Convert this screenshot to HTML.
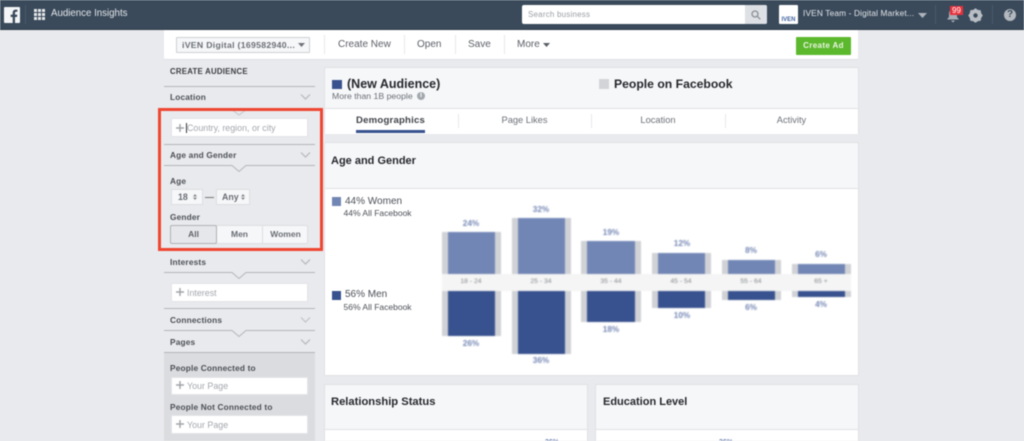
<!DOCTYPE html>
<html><head><meta charset="utf-8"><style>
*{box-sizing:border-box}
html,body{margin:0;padding:0;width:1024px;height:441px;overflow:hidden;background:#e9eaed;font-family:"Liberation Sans",sans-serif}
#p{position:relative;width:1024px;height:441px;overflow:hidden;filter:blur(.45px)}
#p div,#p svg{position:absolute}
.t{white-space:nowrap;line-height:1}
.lbl{font-weight:bold;font-size:8.3px;color:#4b4f56;letter-spacing:.17px}
.ln{background:#b4b6ba;height:1px;left:164px;width:151px}
.inp{background:#fff;left:171px;width:137px;border:1px solid #e3e4e7}
.ph{font-size:8.9px;color:#a4a7ad}
.w{background:#fff}
.pct{font-size:8.2px;color:#7688b5;font-weight:bold;width:40px;text-align:center}
.age{font-size:6.8px;color:#85888d;width:40px;text-align:center}
.tab{font-size:9.3px;color:#6d7178;text-align:center}
.g{background:#d0d2d6}
.f{background:#7286b5}
.m{background:#38528f}
</style></head><body><div id="p">
<div style="left:0;top:0;width:1024px;height:30px;background:#3a4a5b;border-bottom:1px solid #2e3b48"></div>
<svg style="left:4px;top:7px" width="16" height="16" viewBox="0 0 16 16"><rect width="16" height="16" rx="1" fill="#f4f5f6"/><path transform="translate(-4 0)" fill="#3a4a5b" d="M15 16V10h2l.3-2.400H15V6c0-.7.2-1.200 1.200-1.200h1.200V2.700C17.100 2.600 16.500 2.600 15.800 2.600c-1.900 0-3.100 1.100-3.100 3.200v1.800h-2v2.400h2V16z"/></svg>
<div style="left:25px;top:5px;width:1px;height:19px;background:#4b5a6a"></div>
<svg style="left:34px;top:9px" width="11" height="11" fill="#e6e8ea"><rect x="0" y="0" width="3" height="3"/><rect x="4" y="0" width="3" height="3"/><rect x="8" y="0" width="3" height="3"/><rect x="0" y="4" width="3" height="3"/><rect x="4" y="4" width="3" height="3"/><rect x="8" y="4" width="3" height="3"/><rect x="0" y="8" width="3" height="3"/><rect x="4" y="8" width="3" height="3"/><rect x="8" y="8" width="3" height="3"/></svg>
<div class="t" style="left:51px;top:9px;font-size:9.7px;color:#e4e6e9">Audience Insights</div>
<div style="left:522px;top:5px;width:245px;height:19px;background:#fff;border-radius:2px"></div>
<div style="left:745px;top:5px;width:22px;height:19px;background:#dde0e4;border-radius:0 2px 2px 0"></div>
<svg style="left:751px;top:10px" width="10" height="10" fill="none" stroke="#8b9097" stroke-width="1.300"><circle cx="4" cy="4" r="3"/><path d="M6.300 6.300L9.300 9.300"/></svg>
<div class="t" style="left:528px;top:11px;font-size:8px;color:#9a9ea4;letter-spacing:.2px">Search business</div>
<div style="left:779px;top:5px;width:19px;height:19px;background:#fff;border-radius:1px"></div>
<div class="t" style="left:779px;top:17px;font-size:6px;font-weight:bold;color:#41639f;width:19px;text-align:center">IVEN</div>
<div class="t" style="left:803px;top:9px;font-size:8.3px;color:#e4e6e9;letter-spacing:.15px">IVEN Team - Digital Market...</div>
<svg style="left:918px;top:13px" width="9" height="5" fill="#aeb4bb"><path d="M0 0H9L4.500 5Z"/></svg>
<div style="left:935px;top:5px;width:1px;height:19px;background:#4b5a6a"></div>
<svg style="left:946px;top:8px" width="14" height="15" fill="#a7adb5"><path d="M7 1C4 1 3 4 3 6V9L1 11.500H13L11 9V6C11 4 10 1 7 1Z"/><path d="M5 12.500H9L7 14.500Z"/></svg>
<div class="t" style="left:950px;top:6px;width:13px;height:9px;background:#e8303a;color:#fff;font-size:8px;text-align:center;line-height:9px">99</div>
<svg style="left:968px;top:8px" width="15" height="15" viewBox="0 0 15 15"><circle cx="7.500" cy="7.500" r="4.600" fill="none" stroke="#b9bec4" stroke-width="3.400"/><path d="M7.500 .5V14.500M.5 7.500H14.500M2.500 2.500L12.500 12.500M12.500 2.500L2.500 12.500" stroke="#b9bec4" stroke-width="2"/><circle cx="7.500" cy="7.500" r="2.200" fill="#3a4a5b"/></svg>
<div style="left:992px;top:5px;width:1px;height:19px;background:#4b5a6a"></div>
<div class="t" style="left:1004px;top:9px;width:12px;height:12px;border-radius:50%;background:#b4b9bf;color:#3a4a5b;font-size:10px;font-weight:bold;text-align:center;line-height:12px">?</div>

<div class="w" style="left:164px;top:30px;width:694px;height:30px;border-radius:0 0 2px 2px;border-bottom:1px solid #dfe0e3"></div>
<div style="left:176px;top:37px;width:134px;height:16px;background:#f6f7f9;border:1px solid #ced0d4;border-radius:1px"></div>
<div class="t" style="left:182px;top:40.500px;font-size:8.700px;font-weight:bold;color:#6a6e75;letter-spacing:.3px">iVEN Digital (169582940...</div>
<svg style="left:298px;top:43px" width="7" height="4" fill="#70747a"><path d="M0 0H7L3.500 4Z"/></svg>
<div style="left:324px;top:35px;width:1px;height:19px;background:#e7e8ea"></div>
<div class="t" style="left:338px;top:40px;font-size:10px;color:#5a5e65">Create New</div>
<div style="left:404px;top:35px;width:1px;height:19px;background:#e7e8ea"></div>
<div class="t" style="left:417px;top:40px;font-size:10px;color:#5a5e65">Open</div>
<div style="left:455px;top:35px;width:1px;height:19px;background:#e7e8ea"></div>
<div class="t" style="left:468px;top:40px;font-size:10px;color:#5a5e65">Save</div>
<div style="left:504px;top:35px;width:1px;height:19px;background:#e7e8ea"></div>
<div class="t" style="left:517px;top:40px;font-size:10px;color:#5a5e65">More</div>
<svg style="left:543px;top:43px" width="7" height="4" fill="#5a5e65"><path d="M0 0H7L3.500 4Z"/></svg>
<div class="t" style="left:796px;top:37px;width:55px;height:18px;background:#5cb82d;color:#eaf6e2;font-size:8px;font-weight:bold;text-align:center;line-height:18px;letter-spacing:.35px;border-radius:1px">Create Ad</div>

<div class="t" style="left:170px;top:68px;font-size:7.800px;font-weight:bold;color:#3a3d42;letter-spacing:.25px">CREATE AUDIENCE</div>
<div class="ln" style="top:86px"></div>
<div class="t lbl" style="left:170px;top:93px">Location</div>
<svg style="left:300px;top:94px" width="11" height="6" fill="none" stroke="#b5b7bb" stroke-width="1.200"><path d="M1 .5L5.500 5L10 .5"/></svg>
<svg style="left:232px;top:110px" width="14" height="6" fill="none" stroke="#c9cbce" stroke-width="1.200"><path d="M1 .5L7 5L13 .5"/></svg>
<div class="inp" style="top:118px;height:19px"></div>
<svg style="left:176px;top:124px" width="8" height="8" fill="#a0a3a9"><path d="M3.300 0H4.700V3.300H8V4.700H4.700V8H3.300V4.700H0V3.300H3.300Z"/></svg>
<div style="left:186px;top:123px;width:1px;height:10px;background:#333"></div>
<div class="t ph" style="left:187px;top:124px">Country, region, or city</div>
<div class="ln" style="top:144px"></div>
<div class="t lbl" style="left:170px;top:151px">Age and Gender</div>
<svg style="left:300px;top:152px" width="11" height="6" fill="none" stroke="#b5b7bb" stroke-width="1.200"><path d="M1 .5L5.500 5L10 .5"/></svg>
<svg style="left:164px;top:165px" width="151" height="8" fill="none" stroke="#b4b6ba"><path d="M0 .5H68L75 6.500L82 .5H151"/></svg>
<div class="t lbl" style="left:170px;top:177px">Age</div>
<div style="left:171px;top:189px;width:32px;height:16px;background:#f6f7f9;border:1px solid #dcdee1"></div>
<div class="t" style="left:178px;top:193px;font-size:8.800px;font-weight:bold;color:#696d74">18</div>
<svg style="left:193px;top:194px" width="4" height="6" fill="#85888e"><path d="M0 2.500L2 0L4 2.500ZM0 3.500L2 6L4 3.500Z"/></svg>
<div style="left:205px;top:197px;width:9px;height:1px;background:#777"></div>
<div style="left:216px;top:189px;width:34px;height:16px;background:#f6f7f9;border:1px solid #dcdee1"></div>
<div class="t" style="left:222px;top:193px;font-size:8.800px;font-weight:bold;color:#696d74">Any</div>
<svg style="left:241px;top:194px" width="4" height="6" fill="#85888e"><path d="M0 2.500L2 0L4 2.500ZM0 3.500L2 6L4 3.500Z"/></svg>
<div class="t lbl" style="left:170px;top:213px">Gender</div>
<div style="left:170px;top:225px;width:138px;height:19px;background:#f6f7f9;border:1px solid #dcdee1;border-radius:2px"></div>
<div class="t" style="left:170px;top:225px;width:47px;height:19px;background:#e6e7ea;border:1px solid #b0b2b6;border-radius:2px;font-size:8.500px;font-weight:bold;color:#5f636a;text-align:center;line-height:17px">All</div>
<div style="left:262px;top:226px;width:1px;height:17px;background:#dcdee1"></div>
<div class="t" style="left:217px;top:230px;width:45px;font-size:8.500px;font-weight:bold;color:#696d74;text-align:center">Men</div>
<div class="t" style="left:263px;top:230px;width:45px;font-size:8.500px;font-weight:bold;color:#696d74;text-align:center">Women</div>

<div class="t lbl" style="left:170px;top:258px">Interests</div>
<svg style="left:300px;top:259px" width="11" height="6" fill="none" stroke="#b5b7bb" stroke-width="1.200"><path d="M1 .5L5.500 5L10 .5"/></svg>
<svg style="left:164px;top:272px" width="151" height="8" fill="none" stroke="#b4b6ba"><path d="M0 .5H68L75 6.500L82 .5H151"/></svg>
<div class="inp" style="top:283px;height:19px"></div>
<svg style="left:176px;top:288px" width="8" height="8" fill="#a0a3a9"><path d="M3.300 0H4.700V3.300H8V4.700H4.700V8H3.300V4.700H0V3.300H3.300Z"/></svg>
<div class="t ph" style="left:187px;top:289px">Interest</div>
<div class="ln" style="top:308px"></div>
<div class="t lbl" style="left:170px;top:316px">Connections</div>
<svg style="left:300px;top:317px" width="11" height="6" fill="none" stroke="#c0c2c5" stroke-width="1.200"><path d="M1 .5L5.500 5L10 .5"/></svg>
<svg style="left:164px;top:330px" width="151" height="8" fill="none" stroke="#b4b6ba"><path d="M0 .5H68L75 6.500L82 .5H151"/></svg>
<div class="t lbl" style="left:170px;top:338px">Pages</div>
<svg style="left:300px;top:339px" width="11" height="6" fill="none" stroke="#b5b7bb" stroke-width="1.200"><path d="M1 .5L5.500 5L10 .5"/></svg>
<div style="left:164px;top:352px;width:151px;height:89px;background:#dbdcdf;border-top:1px solid #b4b6ba"></div>
<div class="t lbl" style="left:170px;top:364px">People Connected to</div>
<div class="inp" style="top:377px;height:18px"></div>
<svg style="left:176px;top:381px" width="8" height="8" fill="#a0a3a9"><path d="M3.300 0H4.700V3.300H8V4.700H4.700V8H3.300V4.700H0V3.300H3.300Z"/></svg>
<div class="t ph" style="left:187px;top:382px">Your Page</div>
<div class="t lbl" style="left:170px;top:403px">People Not Connected to</div>
<div class="inp" style="top:415px;height:19px"></div>
<svg style="left:176px;top:420px" width="8" height="8" fill="#a0a3a9"><path d="M3.300 0H4.700V3.300H8V4.700H4.700V8H3.300V4.700H0V3.300H3.300Z"/></svg>
<div class="t ph" style="left:187px;top:421px">Your Page</div>

<div style="left:158px;top:107.500px;width:165px;height:143px;border:3px solid #ef4632"></div>

<div style="left:324px;top:67px;width:535px;height:67px;background:#f6f7f9;border:1px solid #e0e1e4;border-radius:2px"></div>
<div class="w" style="left:325px;top:108px;width:533px;height:26px;border-top:1px solid #e0e1e4"></div>
<div style="left:332px;top:80px;width:10px;height:9px;background:#38528f"></div>
<div class="t" style="left:347px;top:77.500px;font-size:12.500px;font-weight:bold;color:#25272b">(New Audience)</div>
<div class="t" style="left:332px;top:92px;font-size:8.700px;color:#6a6e75">More than 1B people</div>
<div class="t" style="left:417px;top:92px;width:8px;height:8px;border-radius:50%;background:#a3a8ae;color:#fff;font-size:7px;font-weight:bold;text-align:center;line-height:8px">i</div>
<div style="left:599px;top:79px;width:10px;height:10px;background:#d2d4d8"></div>
<div class="t" style="left:614px;top:78px;font-size:12.200px;font-weight:bold;color:#25272b">People on Facebook</div>
<div class="t tab" style="left:356px;top:116px;width:69px;font-weight:bold;color:#3f4248;font-size:9.600px;letter-spacing:.2px">Demographics</div>
<div style="left:356px;top:130px;width:69px;height:3px;background:#38528f"></div>
<div style="left:458px;top:114px;width:1px;height:14px;background:#e7e8ea"></div>
<div class="t tab" style="left:458px;top:116px;width:133px">Page Likes</div>
<div style="left:591px;top:114px;width:1px;height:14px;background:#e7e8ea"></div>
<div class="t tab" style="left:591px;top:116px;width:134px">Location</div>
<div style="left:725px;top:114px;width:1px;height:14px;background:#e7e8ea"></div>
<div class="t tab" style="left:725px;top:116px;width:133px">Activity</div>

<div style="left:324px;top:142px;width:535px;height:234px;background:#f6f7f9;border:1px solid #e0e1e4;border-radius:2px"></div>
<div class="w" style="left:325px;top:188px;width:533px;height:187px;border-top:1px solid #e0e1e4"></div>
<div class="t" style="left:331px;top:156px;font-size:11px;font-weight:bold;color:#25272b">Age and Gender</div>
<div style="left:332px;top:197px;width:9px;height:9px;background:#7286b5"></div>
<div class="t" style="left:345px;top:196.500px;font-size:10px;color:#4b4f56">44% Women</div>
<div class="t" style="left:343.500px;top:209px;font-size:8.500px;color:#4b4f56">44% All Facebook</div>
<div style="left:332px;top:291px;width:9px;height:9px;background:#38528f"></div>
<div class="t" style="left:345px;top:290px;font-size:10px;color:#4b4f56">56% Men</div>
<div class="t" style="left:343.500px;top:303px;font-size:8.500px;color:#4b4f56">56% All Facebook</div>

<div style="left:0;top:0;width:1024px;height:441px;filter:blur(.6px)">
<div class="g" style="left:442px;top:232px;width:59px;height:104px"></div>
<div class="f" style="left:448px;top:232px;width:47px;height:42px"></div>
<div class="m" style="left:448px;top:291px;width:47px;height:45px"></div>
<div class="g" style="left:512px;top:218px;width:59px;height:136px"></div>
<div class="f" style="left:518px;top:218px;width:47px;height:56px"></div>
<div class="m" style="left:518px;top:291px;width:47px;height:63px"></div>
<div class="g" style="left:581px;top:241px;width:60px;height:81px"></div>
<div class="f" style="left:587px;top:241px;width:48px;height:33px"></div>
<div class="m" style="left:587px;top:291px;width:48px;height:31px"></div>
<div class="g" style="left:652px;top:253px;width:59px;height:55px"></div>
<div class="f" style="left:658px;top:253px;width:47px;height:21px"></div>
<div class="m" style="left:658px;top:291px;width:47px;height:17px"></div>
<div class="g" style="left:722px;top:260px;width:59px;height:40px"></div>
<div class="f" style="left:728px;top:260px;width:47px;height:14px"></div>
<div class="m" style="left:728px;top:291px;width:47px;height:9px"></div>
<div class="g" style="left:792px;top:264px;width:59px;height:33px"></div>
<div class="f" style="left:798px;top:264px;width:47px;height:10px"></div>
<div class="m" style="left:798px;top:291px;width:47px;height:6px"></div>
<div style="left:442px;top:274px;width:409px;height:17px;background:#f5f5f5"></div>
<div class="t age" style="left:451px;top:278.500px">18 - 24</div>
<div class="t age" style="left:521px;top:278.500px">25 - 34</div>
<div class="t age" style="left:591px;top:278.500px">35 - 44</div>
<div class="t age" style="left:661px;top:278.500px">45 - 54</div>
<div class="t age" style="left:731px;top:278.500px">55 - 64</div>
<div class="t age" style="left:801px;top:278.500px">65 +</div>
<div class="t pct" style="left:451px;top:220px">24%</div>
<div class="t pct" style="left:521px;top:206px">32%</div>
<div class="t pct" style="left:591px;top:229px">19%</div>
<div class="t pct" style="left:662px;top:240px">12%</div>
<div class="t pct" style="left:731px;top:247px">8%</div>
<div class="t pct" style="left:801px;top:251px">6%</div>
<div class="t pct" style="left:451px;top:340px">26%</div>
<div class="t pct" style="left:521px;top:357px">36%</div>
<div class="t pct" style="left:591px;top:326px">18%</div>
<div class="t pct" style="left:662px;top:312px">10%</div>
<div class="t pct" style="left:731px;top:304px">6%</div>
<div class="t pct" style="left:801px;top:301px">4%</div>
</div>

<div style="left:324px;top:384px;width:264px;height:57px;background:#f6f7f9;border:1px solid #e0e1e4"></div>
<div class="w" style="left:325px;top:429px;width:262px;height:12px;border-top:1px solid #dfe1e5"></div>
<div class="t" style="left:331px;top:396.500px;font-size:11.200px;font-weight:bold;color:#25272b">Relationship Status</div>
<div style="left:595px;top:384px;width:264px;height:57px;background:#f6f7f9;border:1px solid #e0e1e4"></div>
<div class="w" style="left:596px;top:429px;width:262px;height:12px;border-top:1px solid #dfe1e5"></div>
<div class="t" style="left:603px;top:396.500px;font-size:11px;font-weight:bold;color:#25272b">Education Level</div>
<div class="t pct" style="left:532px;top:439px;font-size:7px">36%</div>
<div class="t pct" style="left:706px;top:439px;font-size:7px">36%</div>
</div></body></html>
